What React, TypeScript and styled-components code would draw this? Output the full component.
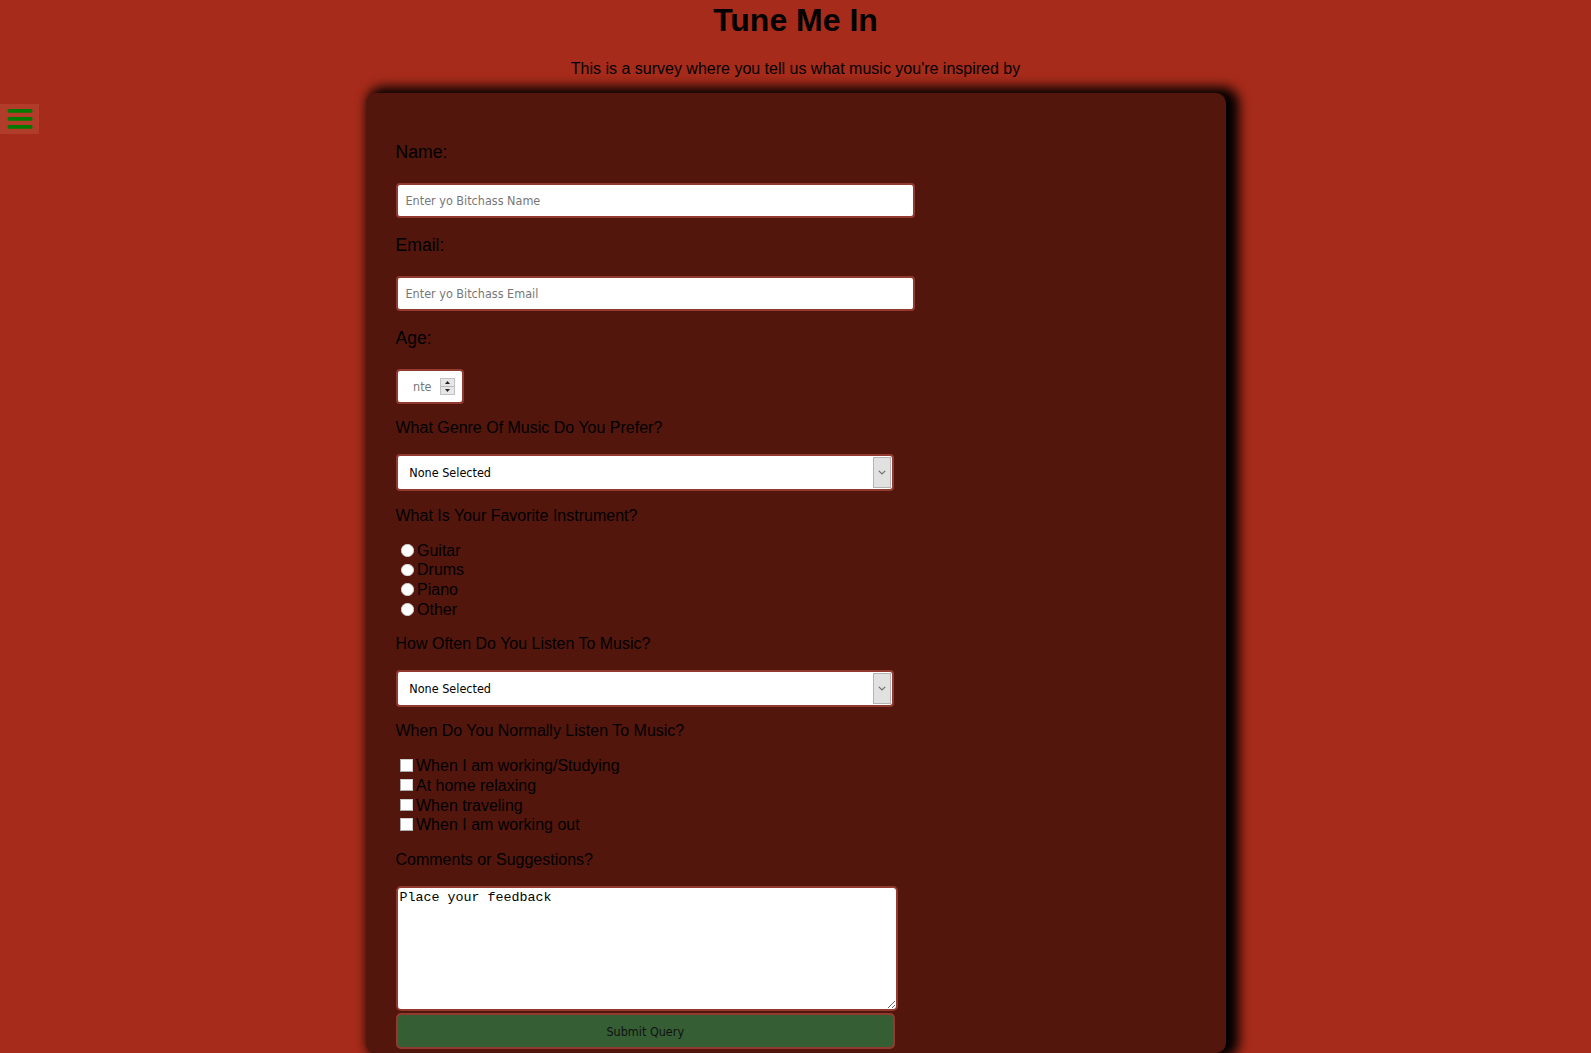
import React from "react";
import styled, { createGlobalStyle } from "styled-components";

const BORDER = "#913b30";
const UI_FONT = `"DejaVu Sans Condensed", "DejaVu Sans", "Liberation Sans", sans-serif`;

const GlobalStyle = createGlobalStyle`
  html, body { margin: 0; padding: 0; }
  body {
    background: #a72b1a;
    font-family: "Liberation Sans", Arial, sans-serif;
    color: #000;
  }
`;

const Page = styled.main`
  position: relative;
  display: flex;
  flex-direction: column;
  align-items: center;
  min-height: 1053px;
  padding-top: 1.5px;
  box-sizing: border-box;
`;

const MenuToggle = styled.button`
  position: absolute;
  left: 0;
  top: 104px;
  width: 39px;
  height: 30px;
  padding: 0;
  border: 0;
  background: #b13c29;
  display: flex;
  align-items: center;
  justify-content: center;
  cursor: pointer;
`;

const Title = styled.h1`
  margin: 0;
  font-size: 32px;
  line-height: normal;
  font-weight: 700;
  text-align: center;
`;

const Subtitle = styled.p`
  margin: 21.7px 0 15px;
  font-size: 16px;
  line-height: normal;
`;

const Card = styled.form`
  box-sizing: border-box;
  width: 860px;
  padding: 32.3px 30px 4.5px;
  background: #53160d;
  border-radius: 10px;
  box-shadow: 7px 0 12px 6px #000;
  display: flex;
  flex-direction: column;
  align-items: flex-start;
`;

const FieldLabel = styled.label`
  margin-top: 16.7px;
  font-size: 17.6px;
  line-height: normal;
`;

const TextInput = styled.input`
  box-sizing: border-box;
  margin-top: 20px;
  width: 519px;
  height: 35px;
  padding: 0 8px;
  border: 2px solid ${BORDER};
  border-radius: 4px;
  background: #fff;
  font-family: ${UI_FONT};
  font-size: 12.5px;
  color: #000;
  outline: none;
  &::placeholder {
    color: #777;
  }
`;

const AgeField = styled.div`
  box-sizing: border-box;
  margin-top: 20px;
  width: 68.5px;
  height: 35px;
  border: 2px solid ${BORDER};
  border-radius: 4px;
  background: #fff;
  display: flex;
  align-items: center;
  padding: 0 0 0 15.5px;
`;

const AgeInput = styled.input`
  width: 27px;
  padding: 0;
  border: 0;
  outline: none;
  background: transparent;
  font-family: ${UI_FONT};
  font-size: 12.5px;
  &::placeholder {
    color: #777;
  }
`;

const Question = styled.div`
  margin-top: 15.8px;
  font-size: 16px;
  line-height: normal;
`;

const SelectBox = styled.div`
  box-sizing: border-box;
  margin-top: 17px;
  width: 498.5px;
  height: 36.5px;
  display: flex;
  align-items: stretch;
  background: #fff;
  border: 2px solid ${BORDER};
  border-radius: 4px;
  font-family: ${UI_FONT};
  font-size: 12.5px;
  color: #000;
`;

const SelectValue = styled.span`
  flex: 1;
  display: flex;
  align-items: center;
  padding-left: 11.8px;
`;

const SelectArrow = styled.span`
  width: 16px;
  margin: 1px 1px 1px 0;
  background: #e1e1e1;
  border: 1px solid #b4b4b4;
  display: flex;
  align-items: center;
  justify-content: center;
`;

const OptionList = styled.div`
  margin-top: 16px;
  display: flex;
  flex-direction: column;
`;

const OptionRow = styled.label<{ $pitch: number }>`
  display: block;
  font-size: 16px;
  line-height: ${(p) => p.$pitch}px;
  height: ${(p) => p.$pitch}px;
  white-space: nowrap;
`;

const Radio = styled.input`
  appearance: none;
  box-sizing: border-box;
  width: 12.5px;
  height: 12.5px;
  margin: 0 3.5px 0 5.5px;
  vertical-align: -1px;
  border-radius: 50%;
  background: #fff;
  border: 1px solid #d6d6d6;
`;

const Checkbox = styled.input`
  appearance: none;
  box-sizing: border-box;
  width: 12.5px;
  height: 12.5px;
  margin: 0 3.5px 0 4.5px;
  vertical-align: -0.5px;
  background: #fff;
  border: 1px solid #a9a9a9;
  border-top-color: #cfcfcf;
  border-right-color: #cfcfcf;
`;

const Feedback = styled.textarea`
  box-sizing: border-box;
  margin-top: 17.3px;
  width: 502px;
  height: 125.5px;
  padding: 2px 2px;
  border: 2px solid ${BORDER};
  border-radius: 5px;
  background: #fff;
  font-family: "Liberation Mono", "Courier New", monospace;
  font-size: 13.33px;
  color: #000;
  outline: none;
`;

const Submit = styled.button`
  box-sizing: border-box;
  margin-top: 2px;
  width: 499.5px;
  height: 35.5px;
  border: 2px solid ${BORDER};
  border-radius: 5px;
  background: #365e35;
  font-family: ${UI_FONT};
  font-size: 12.5px;
  color: #111;
  cursor: pointer;
`;

const Hamburger = () => (
  <svg width="26" height="20" viewBox="0 0 26 20">
    <rect x="0.5" y="0" width="25" height="3.8" rx="1.9" fill="#007a00" />
    <rect x="0.5" y="8" width="25" height="3.8" rx="1.9" fill="#007a00" />
    <rect x="0.5" y="16" width="25" height="3.8" rx="1.9" fill="#007a00" />
  </svg>
);

const Chevron = () => (
  <svg width="8" height="5" viewBox="0 0 8 5">
    <path d="M0.8 0.8 L4 4 L7.2 0.8" fill="none" stroke="#6f6f6f" strokeWidth="1.2" />
  </svg>
);

const Spinner = () => (
  <svg width="15" height="17" viewBox="0 0 15 17">
    <rect x="0.5" y="0.5" width="14" height="16" fill="#e6e6e6" stroke="#c2c2c2" />
    <line x1="1" y1="8.5" x2="14" y2="8.5" stroke="#b8b8b8" />
    <path d="M5 6 L7.5 3 L10 6 Z" fill="#222" />
    <path d="M5 11 L7.5 14 L10 11 Z" fill="#222" />
  </svg>
);

const Select = ({ value }: { value: string }) => (
  <SelectBox role="combobox" aria-label={value}>
    <SelectValue>{value}</SelectValue>
    <SelectArrow>
      <Chevron />
    </SelectArrow>
  </SelectBox>
);

const instruments = ["Guitar", "Drums", "Piano", "Other"];
const times = [
  "When I am working/Studying",
  "At home relaxing",
  "When traveling",
  "When I am working out",
];

export default function App() {
  return (
    <>
      <GlobalStyle />
      <Page>
        <MenuToggle type="button" aria-label="Menu">
          <Hamburger />
        </MenuToggle>
        <Title>Tune Me In</Title>
        <Subtitle>This is a survey where you tell us what music you're inspired by</Subtitle>
        <Card onSubmit={(e) => e.preventDefault()}>
          <FieldLabel htmlFor="name">Name:</FieldLabel>
          <TextInput id="name" type="text" placeholder="Enter yo Bitchass Name" />
          <FieldLabel htmlFor="email">Email:</FieldLabel>
          <TextInput id="email" type="email" placeholder="Enter yo Bitchass Email" />
          <FieldLabel htmlFor="age">Age:</FieldLabel>
          <AgeField>
            <AgeInput id="age" type="text" placeholder="nte" />
            <Spinner />
          </AgeField>

          <Question>What Genre Of Music Do You Prefer?</Question>
          <Select value="None Selected" />

          <Question>What Is Your Favorite Instrument?</Question>
          <OptionList>
            {instruments.map((i) => (
              <OptionRow key={i} $pitch={19.65}>
                <Radio type="radio" name="instrument" value={i} />
                {i}
              </OptionRow>
            ))}
          </OptionList>

          <Question>How Often Do You Listen To Music?</Question>
          <Select value="None Selected" />

          <Question>When Do You Normally Listen To Music?</Question>
          <OptionList>
            {times.map((t) => (
              <OptionRow key={t} $pitch={19.65}>
                <Checkbox type="checkbox" value={t} />
                {t}
              </OptionRow>
            ))}
          </OptionList>

          <Question>Comments or Suggestions?</Question>
          <Feedback defaultValue="Place your feedback" />
          <Submit type="submit">Submit Query</Submit>
        </Card>
      </Page>
    </>
  );
}
